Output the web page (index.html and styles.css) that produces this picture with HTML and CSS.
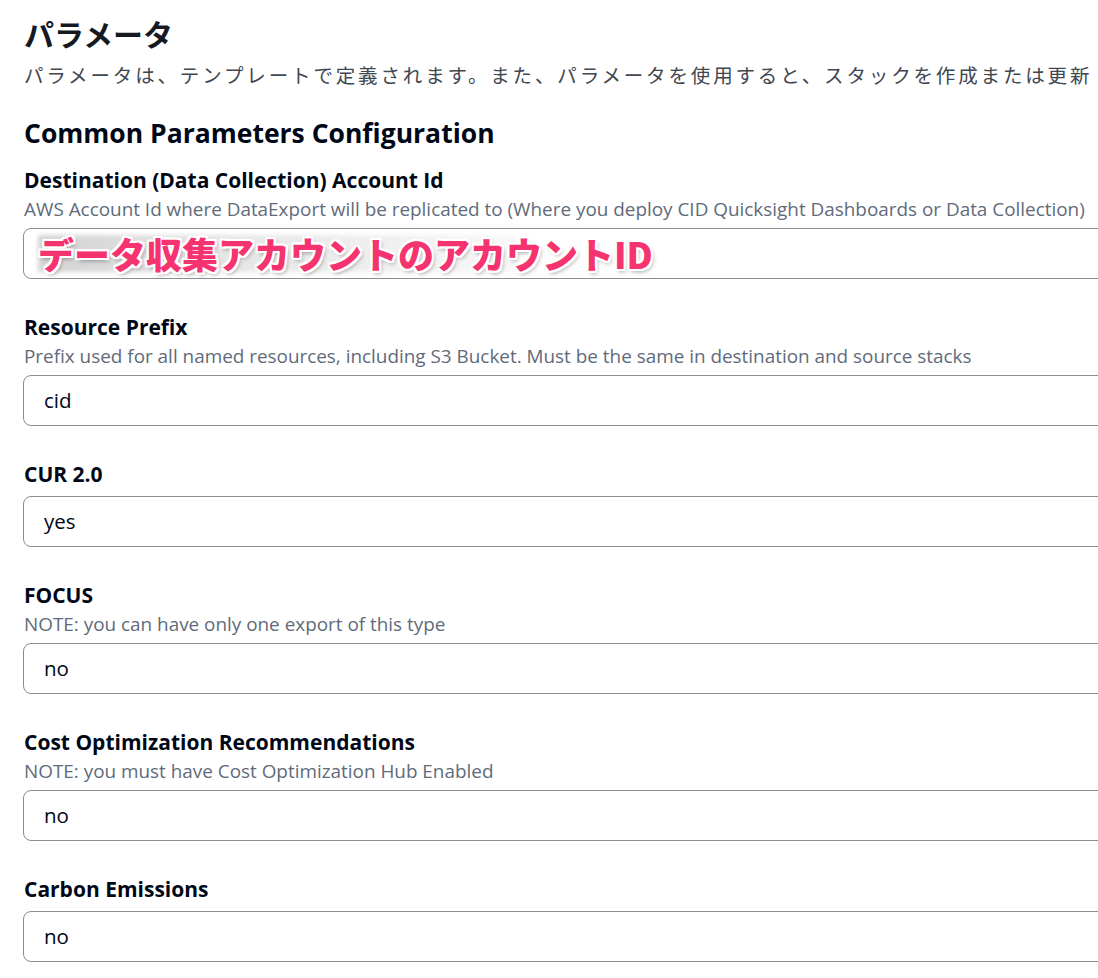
FILE: index.html
```html
<!DOCTYPE html>
<html lang="ja">
<head>
<meta charset="utf-8">
<link rel="stylesheet" href="styles.css">
</head>
<body>
<main class="page">
  <header class="head">
    <h1 class="title">パラメータ</h1>
    <p class="subtitle">パラメータは、テンプレートで定義されます。また、パラメータを使用すると、スタックを作成または更新</p>
  </header>
  <section class="group">
    <h2 class="group-title">Common Parameters Configuration</h2>

    <div class="field first">
      <div class="label">Destination (Data Collection) Account Id</div>
      <div class="desc">AWS Account Id where DataExport will be replicated to (Where you deploy CID Quicksight Dashboards or Data Collection)</div>
      <div class="input masked">
        <span class="mosaic"></span>
        <span class="annot">データ収集アカウントのアカウントID</span>
      </div>
    </div>

    <div class="field">
      <div class="label">Resource Prefix</div>
      <div class="desc">Prefix used for all named resources, including S3 Bucket. Must be the same in destination and source stacks</div>
      <div class="input">cid</div>
    </div>

    <div class="field">
      <div class="label">CUR 2.0</div>
      <div class="input nodesc">yes</div>
    </div>

    <div class="field">
      <div class="label">FOCUS</div>
      <div class="desc">NOTE: you can have only one export of this type</div>
      <div class="input">no</div>
    </div>

    <div class="field">
      <div class="label">Cost Optimization Recommendations</div>
      <div class="desc">NOTE: you must have Cost Optimization Hub Enabled</div>
      <div class="input">no</div>
    </div>

    <div class="field">
      <div class="label">Carbon Emissions</div>
      <div class="input nodesc">no</div>
    </div>
  </section>
</main>
</body>
</html>
```

FILE: styles.css
```css
html, body {
  margin: 0;
  padding: 0;
  background: #ffffff;
  overflow: hidden;
}
body {
  width: 1098px;
  height: 978px;
  font-family: "Open Sans", "Noto Sans CJK JP", sans-serif;
  color: #000716;
}
.page {
  padding: 12px 0 0 24px;
}
.head {
  display: flex;
  flex-direction: column;
}
.title {
  margin: 0;
  font-family: "Noto Sans CJK JP", sans-serif;
  font-size: 30px;
  font-weight: 700;
  line-height: 42px;
  color: #16191f;
}
.subtitle {
  margin: 6px 0 0 0;
  font-family: "Noto Sans CJK JP", sans-serif;
  font-size: 19.5px;
  letter-spacing: 2.85px;
  line-height: 30px;
  color: #414750;
  white-space: nowrap;
}
.group {
  margin-top: 25px;
}
.group-title {
  margin: 0;
  font-size: 26.5px;
  font-weight: 700;
  line-height: 36px;
  color: #000716;
}
.field {
  display: flex;
  flex-direction: column;
  margin-top: 34px;
}
.field.first {
  margin-top: 15px;
}
.label {
  font-size: 21px;
  font-weight: 700;
  line-height: 28px;
  color: #000716;
}
.desc {
  font-size: 18.9px;
  line-height: 30px;
  color: #5f6b7a;
  white-space: nowrap;
}
.input {
  position: relative;
  box-sizing: border-box;
  width: 1100px;
  height: 51px;
  margin-left: -1px;
  margin-top: 4px;
  padding-left: 20px;
  border: 1px solid #8c8c94;
  border-radius: 8px;
  font-size: 20.5px;
  line-height: 49px;
  color: #000716;
}
.input.nodesc {
  margin-top: 8px;
}
.mosaic {
  position: absolute;
  left: 14px;
  top: 6px;
  width: 480px;
  height: 37px;
  background: linear-gradient(90deg, #d4d4d4, #e6e6e6 40%, #efefef 70%, #f8f8f8);
  filter: blur(2px);
}
.annot {
  position: absolute;
  left: 14px;
  top: 1px;
  font-family: "Noto Sans CJK JP", sans-serif;
  font-size: 36px;
  font-weight: 900;
  line-height: 46px;
  color: #f5336f;
  white-space: nowrap;
  text-shadow:
    2px 0 0 #fff, -2px 0 0 #fff, 0 2px 0 #fff, 0 -2px 0 #fff,
    2px 2px 0 #fff, -2px -2px 0 #fff, 2px -2px 0 #fff, -2px 2px 0 #fff,
    2px 3px 4px rgba(0,0,0,0.35);
}
```
